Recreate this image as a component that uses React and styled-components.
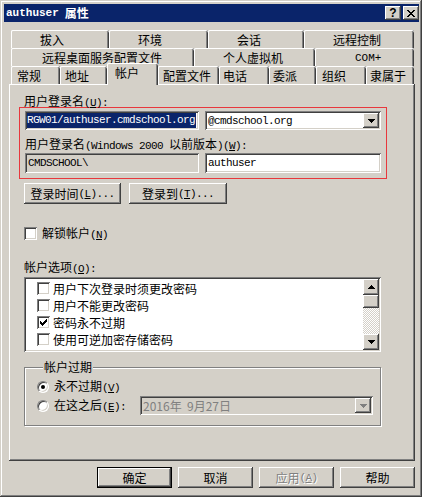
import React from "react";
import styled, { createGlobalStyle } from "styled-components";

const Global = createGlobalStyle`
  html, body { margin: 0; padding: 0; background: #d4d0c8; }
  * { box-sizing: border-box; }
`;

const CJK = `"Noto Sans CJK SC", "Liberation Sans", sans-serif`;
const MONO = `"Liberation Mono", "Noto Sans CJK SC", monospace`;

const raised = `inset -1px -1px #404040, inset 1px 1px #fff, inset -2px -2px #808080, inset 2px 2px #d4d0c8`;
const sunken = `inset 1px 1px #808080, inset -1px -1px #fff, inset 2px 2px #404040, inset -2px -2px #d4d0c8`;

const Window = styled.div`
  width: 422px;
  height: 497px;
  background: #d4d0c8;
  padding: 4px 3px 3px 4px;
  box-shadow: inset -1px -1px #404040, inset 1px 1px #d4d0c8, inset -2px -2px #808080, inset 2px 2px #fff;
  font-family: ${CJK};
  font-size: 12px;
  color: #000;
`;

const TitleBar = styled.div`
  height: 18px;
  background: #0a246a;
  display: flex;
  align-items: center;
  padding-left: 2px;
  color: #fff;
  font-weight: bold;
`;

const TitleText = styled.div`
  flex: 1;
  display: flex;
  align-items: center;
  gap: 6px;
  line-height: 14px;
`;

const TitleLatin = styled.span`
  font-family: "Liberation Mono", monospace;
  font-size: 11px;
  font-weight: bold;
`;

const TitleButton = styled.div`
  width: 16px;
  height: 14px;
  margin-left: ${p => p.$ml || 0}px;
  background: #d4d0c8;
  box-shadow: ${raised};
  display: flex;
  align-items: center;
  justify-content: center;
  color: #000;
  font-family: "Liberation Sans", sans-serif;
  font-size: 12px;
  font-weight: bold;
  line-height: 12px;
`;

/* Latin run inside Chinese labels: narrow fixed-width like the system font */
const L = styled.span`
  font-family: "Liberation Mono", monospace;
  font-size: 11px;
  letter-spacing: -0.6px;
`;

const Body = styled.div`
  padding: 8px 4px 0 5px;
`;

const TabRow = styled.div`
  display: flex;
  align-items: flex-end;
  height: 18px;
  margin-left: 2px;
  width: 403px;
`;

const Tab = styled.div`
  width: ${p => p.$w}px;
  height: ${p => (p.$active ? 22 : 18)}px;
  margin-bottom: ${p => (p.$active ? -1 : 0)}px;
  position: ${p => (p.$active ? "relative" : "static")};
  z-index: ${p => (p.$active ? 2 : "auto")};
  padding: 4px 0 0 ${p => p.$pl}px;
  background: #d4d0c8;
  border-top-left-radius: 2px;
  border-top-right-radius: 2px;
  box-shadow: inset 1px 0 #fff, inset 0 1px #fff, inset -1px 0 #404040, inset -2px 0 #808080;
  white-space: nowrap;
`;

const TabLabel = styled.span`
  display: block;
  line-height: 12px;
  height: 12px;
  font-family: ${p => (p.$mono ? MONO : CJK)};
  font-size: ${p => (p.$mono ? "11px" : "12px")};
`;

const Panel = styled.div`
  width: 406px;
  height: 377px;
  padding: 11px 0 0 15px;
  background: #d4d0c8;
  box-shadow: inset -1px -1px #404040, inset 1px 1px #fff, inset -2px -2px #808080;
`;

const FieldLabel = styled.div`
  line-height: 12px;
  height: 12px;
  margin-top: ${p => p.$mt || 0}px;
  white-space: nowrap;
`;

const Highlight = styled.div`
  width: 368px;
  margin-left: -5px;
  border: 1px solid #e8383d;
  padding: 3px 5px 5px 5px;
`;

const FieldRow = styled.div`
  display: flex;
  gap: 6px;
  margin-top: ${p => p.$mt || 0}px;
`;

const TextBox = styled.div`
  width: ${p => p.$w}px;
  height: ${p => p.$h}px;
  padding: 2px 2px 2px 3px;
  background: ${p => (p.$disabled ? "#d4d0c8" : "#fff")};
  box-shadow: ${sunken};
  display: flex;
  align-items: center;
  overflow: hidden;
  white-space: nowrap;
  font-family: ${MONO};
  font-size: 11px;
  letter-spacing: -0.6px;
  color: ${p => (p.$gray ? "#808080" : "#000")};
`;

const Selection = styled.span`
  background: #0a246a;
  color: #fff;
  line-height: 15px;
  width: 100%;
  margin-left: -1px;
`;

const ComboText = styled.span`
  flex: 1;
  white-space: pre;
  font-family: ${p => (p.$cjk ? CJK : MONO)};
  font-size: ${p => (p.$cjk ? "12px" : "11px")};
  letter-spacing: ${p => (p.$cjk ? "0" : "-0.6px")};
`;

const DropButton = styled.div`
  width: 16px;
  align-self: stretch;
  background: #d4d0c8;
  box-shadow: ${raised};
  display: flex;
  align-items: center;
  justify-content: center;
`;

const ButtonRow = styled.div`
  display: flex;
  gap: ${p => p.$gap}px;
  margin-top: ${p => p.$mt || 0}px;
  justify-content: ${p => (p.$end ? "flex-end" : "flex-start")};
`;

const Button = styled.div`
  width: ${p => p.$w}px;
  height: 21px;
  background: #d4d0c8;
  box-shadow: ${p =>
    p.$default
      ? "inset 0 0 0 1px #000, inset -2px -2px #404040, inset 2px 2px #fff, inset -3px -3px #808080"
      : raised};
  display: flex;
  align-items: center;
  justify-content: center;
  line-height: 14px;
  white-space: nowrap;
  color: ${p => (p.$disabled ? "#808080" : "#000")};
  text-shadow: ${p => (p.$disabled ? "1px 1px #fff" : "none")};
`;

const CheckRow = styled.div`
  display: flex;
  align-items: center;
  gap: ${p => p.$gap || 5}px;
  height: ${p => p.$h || 13}px;
  margin-top: ${p => p.$mt || 0}px;
  line-height: 14px;
  white-space: nowrap;
`;

const Box = styled.div`
  width: 13px;
  height: 13px;
  flex: none;
  background: #fff;
  box-shadow: ${sunken};
  display: flex;
  align-items: center;
  justify-content: center;
`;

const ListBox = styled.div`
  width: 357px;
  height: 75px;
  margin-top: 4px;
  background: #fff;
  box-shadow: ${sunken};
  padding: 2px;
  display: flex;
`;

const ListItems = styled.div`
  flex: 1;
  padding: 1px 0 0 11px;
`;

const ListItem = styled(CheckRow)`
  height: 17px;
  gap: 3px;
`;

const ScrollBar = styled.div`
  width: 16px;
  display: flex;
  flex-direction: column;
`;

const ScrollButton = styled.div`
  height: ${p => p.$h}px;
  background: #d4d0c8;
  box-shadow: ${raised};
  display: flex;
  align-items: center;
  justify-content: center;
`;

const ScrollTrack = styled.div`
  flex: 1;
  background: repeating-conic-gradient(#fff 0 25%, #d4d0c8 0 50%) 0 0 / 2px 2px;
`;

const Group = styled.fieldset`
  width: 357px;
  margin: 8px 0 0 0;
  padding: 4px 0 10px 12px;
  border: 1px solid #808080;
  box-shadow: 1px 1px #fff, inset 1px 1px #fff;
`;

const Legend = styled.legend`
  margin-left: 6px;
  padding: 0 1px;
  line-height: 14px;
  background: #d4d0c8;
`;

const Radio = styled.div`
  width: 12px;
  height: 12px;
  flex: none;
  border-radius: 50%;
  background: #fff;
  border: 1px solid;
  border-color: #808080 #fff #fff #808080;
  box-shadow: inset 1px 1px #404040, inset -1px -1px #d4d0c8;
  display: flex;
  align-items: center;
  justify-content: center;
  &::after {
    content: "";
    width: 4px;
    height: 4px;
    border-radius: 50%;
    background: ${p => (p.$on ? "#000" : "transparent")};
  }
`;

const RadioLabel = styled.span`
  width: ${p => (p.$w ? `${p.$w}px` : "auto")};
  flex: none;
`;

const Arrow = ({ dir = "down", color = "#000" }) => (
  <svg width="7" height="4" viewBox="0 0 7 4" shapeRendering="crispEdges">
    {dir === "down" ? (
      <path d="M0 0h7v1H0zM1 1h5v1H1zM2 2h3v1H2zM3 3h1v1H3z" fill={color} />
    ) : (
      <path d="M3 0h1v1H3zM2 1h3v1H2zM1 2h5v1H1zM0 3h7v1H0z" fill={color} />
    )}
  </svg>
);

const Check = () => (
  <svg width="7" height="7" viewBox="0 0 7 7" shapeRendering="crispEdges">
    <path
      d="M6 0h1v1H6zM5 1h2v1H5zM0 2h1v1H0zM4 2h3v1H4zM0 3h2v1H0zM3 3h3v1H3zM0 4h5v1H0zM1 5h3v1H1zM2 6h1v1H2z"
      fill="#000"
    />
  </svg>
);

const CloseGlyph = () => (
  <svg width="8" height="7" viewBox="0 0 8 7" shapeRendering="crispEdges">
    <path
      d="M0 0h2v1H0zM6 0h2v1H6zM1 1h2v1H1zM5 1h2v1H5zM2 2h4v1H2zM3 3h2v1H3zM2 4h4v1H2zM1 5h2v1H1zM5 5h2v1H5zM0 6h2v1H0zM6 6h2v1H6z"
      fill="#000"
    />
  </svg>
);

const tabRows = [
  [
    { t: "拔入", w: 98, pl: 29 },
    { t: "环境", w: 99, pl: 29 },
    { t: "会话", w: 96, pl: 29 },
    { t: "远程控制", w: 110, pl: 29 },
  ],
  [
    { t: "远程桌面服务配置文件", w: 183, pl: 31 },
    { t: "个人虚拟机", w: 121, pl: 29 },
    { t: "COM+", w: 99, pl: 40, mono: true },
  ],
  [
    { t: "常规", w: 49, pl: 6 },
    { t: "地址", w: 47, pl: 5 },
    { t: "帐户", w: 51, pl: 8, active: true },
    { t: "配置文件", w: 61, pl: 5 },
    { t: "电话", w: 50, pl: 4 },
    { t: "委派", w: 47, pl: 4 },
    { t: "组织", w: 50, pl: 6 },
    { t: "隶属于", w: 48, pl: 4 },
  ],
];

const options = [
  { t: "用户下次登录时须更改密码", on: false },
  { t: "用户不能更改密码", on: false },
  { t: "密码永不过期", on: true },
  { t: "使用可逆加密存储密码", on: false },
];

export default function App() {
  return (
    <>
      <Global />
      <Window>
        <TitleBar>
          <TitleText>
            <TitleLatin>authuser</TitleLatin>
            <span>属性</span>
          </TitleText>
          <TitleButton>?</TitleButton>
          <TitleButton $ml={2}>
            <CloseGlyph />
          </TitleButton>
        </TitleBar>

        <Body>
          {tabRows.map((row, i) => (
            <TabRow key={i}>
              {row.map(tab => (
                <Tab key={tab.t} $w={tab.w} $pl={tab.pl} $active={tab.active}>
                  <TabLabel $mono={tab.mono}>{tab.t}</TabLabel>
                </Tab>
              ))}
            </TabRow>
          ))}

          <Panel>
            <FieldLabel>用户登录名<L>(<u>U</u>):</L></FieldLabel>
            <Highlight>
              <FieldRow>
                <TextBox $w={174} $h={19}>
                  <Selection>RGW01/authuser.cmdschool.org</Selection>
                </TextBox>
                <TextBox $w={176} $h={19}>
                  <ComboText>@cmdschool.org</ComboText>
                  <DropButton>
                    <Arrow />
                  </DropButton>
                </TextBox>
              </FieldRow>
              <FieldLabel $mt={8}>
                用户登录名<L>(Windows 2000 </L>以前版本<L>)(<u>W</u>):</L>
              </FieldLabel>
              <FieldRow $mt={3}>
                <TextBox $w={174} $h={20} $disabled>
                  CMDSCHOOL\
                </TextBox>
                <TextBox $w={176} $h={20}>
                  authuser
                </TextBox>
              </FieldRow>
            </Highlight>

            <ButtonRow $gap={8} $mt={4}>
              <Button $w={97}>登录时间<L>(<u>L</u>)...</L></Button>
              <Button $w={98}>登录到<L>(<u>T</u>)...</L></Button>
            </ButtonRow>

            <CheckRow $mt={23}>
              <Box />
              <span>解锁帐户<L>(<u>N</u>)</L></span>
            </CheckRow>

            <FieldLabel $mt={21}>帐户选项<L>(<u>O</u>):</L></FieldLabel>
            <ListBox>
              <ListItems>
                {options.map(o => (
                  <ListItem key={o.t}>
                    <Box>{o.on && <Check />}</Box>
                    <span>{o.t}</span>
                  </ListItem>
                ))}
              </ListItems>
              <ScrollBar>
                <ScrollButton $h={16}>
                  <Arrow dir="up" />
                </ScrollButton>
                <ScrollButton $h={13} />
                <ScrollTrack />
                <ScrollButton $h={16}>
                  <Arrow />
                </ScrollButton>
              </ScrollBar>
            </ListBox>

            <Group>
              <Legend>帐户过期</Legend>
              <CheckRow $h={18} $gap={5}>
                <Radio $on />
                <RadioLabel>永不过期<L>(<u>V</u>)</L></RadioLabel>
              </CheckRow>
              <CheckRow $h={19} $gap={5}>
                <Radio />
                <RadioLabel $w={81}>在这之后<L>(<u>E</u>):</L></RadioLabel>
                <TextBox $w={233} $h={19} $disabled $gray>
                  <ComboText $cjk>2016年  9月27日</ComboText>
                  <DropButton>
                    <Arrow color="#808080" />
                  </DropButton>
                </TextBox>
              </CheckRow>
            </Group>
          </Panel>

          <ButtonRow $gap={6} $mt={6} $end>
            <Button $w={75} $default>确定</Button>
            <Button $w={75}>取消</Button>
            <Button $w={75} $disabled>应用<L>(<u>A</u>)</L></Button>
            <Button $w={75}>帮助</Button>
          </ButtonRow>
        </Body>
      </Window>
    </>
  );
}
